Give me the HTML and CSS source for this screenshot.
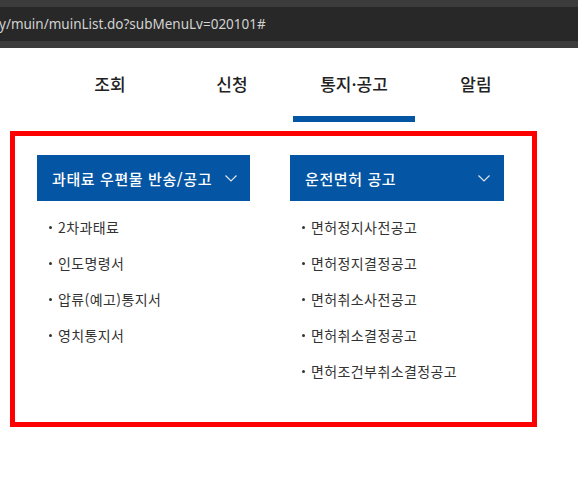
FILE: index.html
```html
<!DOCTYPE html>
<html lang="ko">
<head>
<meta charset="utf-8">
<link rel="stylesheet" href="styles.css">
</head>
<body>
<div class="addr">
  <span class="url">y/muin/muinList.do?subMenuLv=020101#</span>
</div>
<nav class="gnb">
  <a class="gnb-item">조회</a>
  <a class="gnb-item">신청</a>
  <a class="gnb-item active">통지·공고</a>
  <a class="gnb-item">알림</a>
</nav>
<div class="panel">
  <div class="col col1">
    <div class="col-head">
      <span>과태료 우편물 반송/공고</span>
      <svg class="chev" width="12" height="7" viewBox="0 0 12 7"><polyline points="0.5,0.5 6,6 11.5,0.5" fill="none" stroke="#dce6f2" stroke-width="1.2"/></svg>
    </div>
    <ul class="list">
      <li>2차과태료</li>
      <li>인도명령서</li>
      <li>압류(예고)통지서</li>
      <li>영치통지서</li>
    </ul>
  </div>
  <div class="col col2">
    <div class="col-head">
      <span>운전면허 공고</span>
      <svg class="chev" width="12" height="7" viewBox="0 0 12 7"><polyline points="0.5,0.5 6,6 11.5,0.5" fill="none" stroke="#dce6f2" stroke-width="1.2"/></svg>
    </div>
    <ul class="list">
      <li>면허정지사전공고</li>
      <li>면허정지결정공고</li>
      <li>면허취소사전공고</li>
      <li>면허취소결정공고</li>
      <li>면허조건부취소결정공고</li>
    </ul>
  </div>
</div>
</body>
</html>
```
FILE: styles.css
```css
html, body {
  margin: 0;
  padding: 0;
  background: #ffffff;
}
body {
  font-family: "Noto Sans CJK KR", "Noto Sans", sans-serif;
  width: 578px;
  height: 478px;
  overflow: hidden;
}
.addr {
  height: 34px;
  border-top: 7px solid #3c3c3c;
  border-bottom: 7px solid #3c3c3c;
  background: #282828;
  display: flex;
  align-items: center;
}
.url {
  font-family: "Noto Sans", "Open Sans", sans-serif;
  font-size: 13.5px;
  color: #d2d2d2;
  margin-left: -1px;
}
.gnb {
  display: flex;
  margin-left: 49px;
  height: 74px;
}
.gnb-item {
  width: 122px;
  box-sizing: border-box;
  text-align: center;
  padding-top: 24px;
  line-height: 24px;
  font-size: 17px;
  font-weight: 500;
  color: #222222;
}
.gnb-item.active {
  border-bottom: 6px solid #0455a4;
}
.panel {
  margin: 9px 0 0 10px;
  width: 495px;
  height: 267px;
  border: 5px solid #ff0000;
  padding: 19px 0 0 22px;
  display: flex;
  gap: 40px;
}
.col1 { width: 213px; }
.col2 { width: 214px; }
.col-head {
  height: 46px;
  background: #0455a4;
  color: #ffffff;
  display: flex;
  align-items: center;
  justify-content: space-between;
  padding: 0 13px 0 15px;
  font-size: 15px;
  font-weight: 500;
  letter-spacing: 0.6px;
}
.col2 .col-head { padding-right: 14px; }
.chev { display: block; margin-top: 1px; }
.list {
  list-style: none;
  margin: 8px 0 0 0;
  padding: 0;
}
.list li {
  position: relative;
  padding-left: 21px;
  line-height: 36px;
  font-size: 14px;
  letter-spacing: 0.4px;
  color: #333333;
}
.list li::before {
  content: "";
  position: absolute;
  left: 12px;
  top: 17px;
  width: 3px;
  height: 3px;
  border-radius: 50%;
  background: #333333;
}
```
